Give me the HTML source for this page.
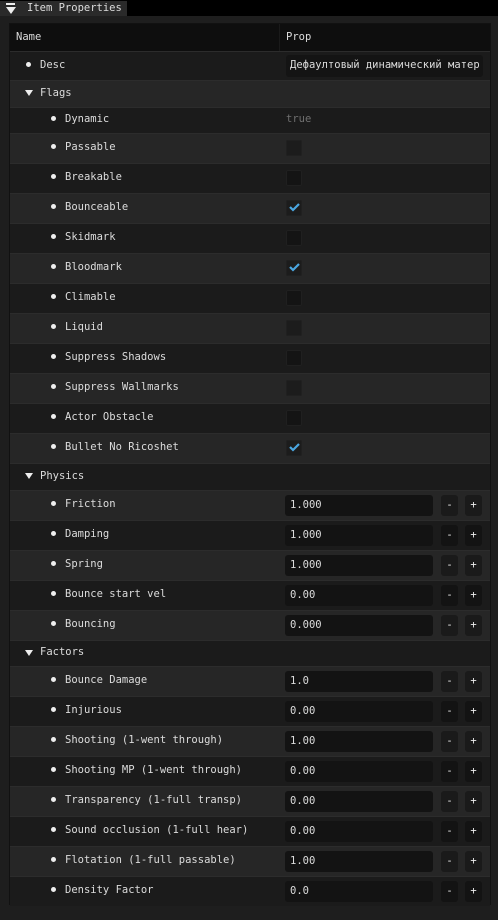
<!DOCTYPE html>
<html><head><meta charset="utf-8"><style>
*{margin:0;padding:0;box-sizing:border-box}
body{width:498px;height:920px;background:#1e1e1e;font-family:"DejaVu Sans Mono","Liberation Mono",monospace;font-size:10.5px;color:#dcdcdc;position:relative;overflow:hidden}
.titlebar{position:absolute;left:0;top:0;width:498px;height:16px;background:#000}
.tab{position:absolute;left:0;top:1px;width:127px;height:15px;background:#2a2a2a}
.tab .t{position:absolute;left:27px;top:1px;font-size:10.5px;color:#ddd}
.tri{position:absolute;width:0;height:0;border-left:4px solid transparent;border-right:4px solid transparent;border-top:6px solid #eee}
.table{position:absolute;left:9px;top:23px;width:482px;height:882px;border:1px solid #111;background:#1b1b1b}
.row{position:absolute;left:10px;width:480px;box-shadow:inset 0 1px 0 #2c2c2c}
.d{background:#1b1b1b}.l{background:#262626;}
.hdr{background:#0e0e0e;box-shadow:none}
.txt{position:absolute;top:50%;transform:translateY(-57%);white-space:nowrap}
.dot{position:absolute;top:50%;width:5px;height:5px;border-radius:50%;background:#eee;margin-top:-4px}
.cb{position:absolute;left:276px;top:50%;margin-top:-8px;width:16px;height:16px;background:#141414;border-radius:2px;box-shadow:0 0 0 1px #202020 inset}
.l .cb{background:#1c1c1c}
.in{position:absolute;left:275px;top:50%;margin-top:-10px;width:148px;height:21px;background:#131313;border-radius:3px}
.in span{position:absolute;left:5px;top:4px}
.btn{position:absolute;top:50%;margin-top:-10px;width:17px;height:21px;background:#131313;border-radius:3px;text-align:center;line-height:21px;color:#eee}
.l .btn{background:#1a1a1a}
</style></head><body>
<div class="titlebar"></div>
<div class="tab"><div style="position:absolute;left:6px;top:2px;width:9px;height:2px;background:#eee"></div><div class="tri" style="left:6px;top:6px;border-left-width:5px;border-right-width:5px;border-top-width:7px"></div><div class="t">Item Properties</div></div>
<div class="table"></div>
<div class="row hdr" style="top:24px;height:27px"><div class="txt" style="left:6px">Name</div><div style="position:absolute;left:269px;top:0;width:1px;height:27px;background:#1a1a1a"></div><div class="txt" style="left:276px">Prop</div></div>
<div class="row d" style="top:51px;height:29px"><div class="dot" style="left:16px"></div><div class="txt" style="left:30px">Desc</div><div style="position:absolute;left:276px;top:4px;width:197px;height:22px;background:#141414;border-radius:3px"></div><div class="txt" style="left:280px">Дефаултовый динамический матер</div></div>
<div class="row l" style="top:80px;height:27px"><div class="tri" style="left:15px;top:10px"></div><div class="txt" style="left:30px">Flags</div></div>
<div class="row d" style="top:107px;height:26px"><div class="dot" style="left:41px"></div><div class="txt" style="left:55px">Dynamic</div><div class="txt" style="left:276px;color:#6f6f6f">true</div></div>
<div id="rest"></div>
<script>
var out='';
function chk(){return '<svg style="position:absolute;left:279px;top:50%;margin-top:-6px" width="11" height="10" viewBox="0 0 11 10"><path d="M1 5 L4 8 L10 2" stroke="#4aa6e0" stroke-width="2.2" fill="none"/></svg>';}
var flags=[["Passable",0],["Breakable",0],["Bounceable",1],["Skidmark",0],["Bloodmark",1],["Climable",0],["Liquid",0],["Suppress Shadows",0],["Suppress Wallmarks",0],["Actor Obstacle",0],["Bullet No Ricoshet",1]];
var y=133,idx=3;
flags.forEach(function(f){out+='<div class="row '+(idx%2?'l':'d')+'" style="top:'+y+'px;height:30px"><div class="dot" style="left:41px"></div><div class="txt" style="left:55px">'+f[0]+'</div><div class="cb"></div>'+(f[1]?chk():'')+'</div>';y+=30;idx++;});
function sec(n,h){out+='<div class="row '+(idx%2?'l':'d')+'" style="top:'+y+'px;height:'+h+'px"><div class="tri" style="left:15px;top:10px"></div><div class="txt" style="left:30px">'+n+'</div></div>';y+=h;idx++;}
function num(n,v){out+='<div class="row '+(idx%2?'l':'d')+'" style="top:'+y+'px;height:30px"><div class="dot" style="left:41px"></div><div class="txt" style="left:55px">'+n+'</div><div class="in"><span>'+v+'</span></div><div class="btn" style="left:431px">-</div><div class="btn" style="left:455px">+</div></div>';y+=30;idx++;}
sec("Physics",27);
[["Friction","1.000"],["Damping","1.000"],["Spring","1.000"],["Bounce start vel","0.00"],["Bouncing","0.000"]].forEach(function(a){num(a[0],a[1])});
sec("Factors",26);
[["Bounce Damage","1.0"],["Injurious","0.00"],["Shooting (1-went through)","1.00"],["Shooting MP (1-went through)","0.00"],["Transparency (1-full transp)","0.00"],["Sound occlusion (1-full hear)","0.00"],["Flotation (1-full passable)","1.00"],["Density Factor","0.0"]].forEach(function(a){num(a[0],a[1])});
document.getElementById('rest').innerHTML=out;
</script>
</body></html>
